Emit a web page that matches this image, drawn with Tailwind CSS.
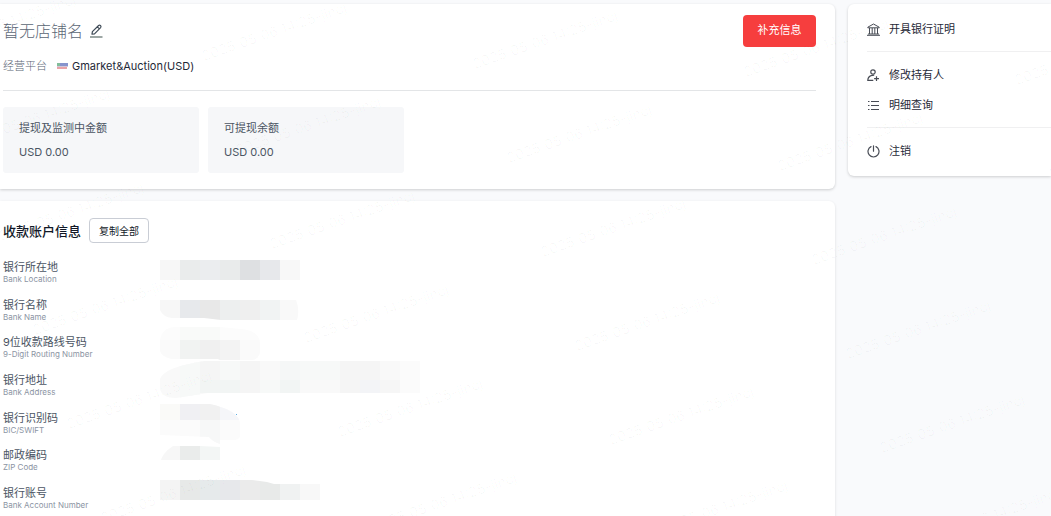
<!DOCTYPE html>
<html lang="zh-CN">
<head>
<meta charset="utf-8">
<meta name="viewport" content="width=device-width, initial-scale=1">
<title>店铺详情</title>
<script src="https://cdn.jsdelivr.net/npm/@tailwindcss/browser@4"></script>
</head>
<body class="relative min-h-screen overflow-hidden bg-[#f9fafc] font-['Inter','Noto_Sans_CJK_SC',sans-serif] text-[11px] leading-4 text-[#1f2937]">
<div class="flex items-start gap-[13px] pt-1">
  <main class="flex min-w-0 flex-1 flex-col gap-3">
    <section class="rounded-r-md bg-white pt-[11px] pr-[19px] pb-4 pl-[3px] shadow-[0_1px_3px_rgba(0,0,0,0.18)]">
      <div class="flex items-start justify-between">
        <div class="flex items-center gap-[7px] pt-1">
          <h1 class="text-base leading-6 font-light text-[#5b6675]">暂无店铺名</h1>
          <button type="button" aria-label="编辑店铺名" class="text-[#3f4b57]">
            <svg class="h-4 w-[13px]" viewBox="0 0 13 16" fill="none" stroke="currentColor"><path d="M2 11.2 2.4 8.7 8.6 2.5Q9.6 1.7 10.6 2.7 11.4 3.6 10.6 4.6L4.5 10.8ZM7.4 3.8 9.4 5.8" stroke-width="1.2" stroke-linejoin="round"/><path d="M0 14H12.5" stroke="#84918f" stroke-width="1.6"/></svg>
          </button>
        </div>
        <button type="button" class="h-8 w-[73px] rounded-[4px] bg-[#f63e3e] pb-[2px] text-white">补充信息</button>
      </div>
      <div class="mt-[11px] flex items-center border-b border-[#e3e5e7] pb-4">
        <span class="font-light text-[#5b6675]">经营平台</span>
        <svg class="mr-1 ml-[10px] h-[6px] w-[11px]" viewBox="0 0 11 6" aria-hidden="true"><path d="M0 0H3V3H0Z" fill="#83bd9b"/><path d="M3 0H11V3H3Z" fill="#8794cd"/><path d="M0 3H11V4H0Z" fill="#d2c7d9"/><path d="M0 4H10V6H0Z" fill="#e9a3a8"/></svg>
        <span>Gmarket&amp;Auction(USD)</span>
      </div>
      <div class="mt-4 flex gap-[9px] text-[#4b5563]">
        <div class="w-[196px] rounded-[3px] bg-[#f6f7f9] px-4 py-[13px]"><p>提现及监测中金额</p><p class="mt-2">USD 0.00</p></div>
        <div class="w-[196px] rounded-[3px] bg-[#f6f7f9] px-4 py-[13px]"><p>可提现余额</p><p class="mt-2">USD 0.00</p></div>
      </div>
    </section>
    <section class="rounded-tr-md bg-white pt-[17px] pr-[19px] pl-[3px] shadow-[0_1px_3px_rgba(0,0,0,0.12)]">
      <div class="flex items-center gap-2">
        <h2 class="text-[13px] font-medium text-[#111827]">收款账户信息</h2>
        <button type="button" class="h-[25px] w-[60px] rounded-[4px] border border-[#c9cdd5] text-[10px] text-[#111827]">复制全部</button>
      </div>
      <div class="mt-3 flex">
        <dl class="w-[157px] shrink-0 text-[#4b5563]">
          <div class="h-[38px] pt-1"><dt class="leading-4">银行所在地</dt><dd class="text-[8px] leading-2 text-[#8b94a3]">Bank Location</dd></div>
          <div class="h-[37px] pt-1"><dt class="leading-4">银行名称</dt><dd class="text-[8px] leading-2 text-[#8b94a3]">Bank Name</dd></div>
          <div class="h-[38px] pt-1"><dt class="leading-4">9位收款路线号码</dt><dd class="text-[8px] leading-2 text-[#8b94a3]">9-Digit Routing Number</dd></div>
          <div class="h-[38px] pt-1"><dt class="leading-4">银行地址</dt><dd class="text-[8px] leading-2 text-[#8b94a3]">Bank Address</dd></div>
          <div class="h-[37px] pt-1"><dt class="leading-4">银行识别码</dt><dd class="text-[8px] leading-2 text-[#8b94a3]">BIC/SWIFT</dd></div>
          <div class="h-[38px] pt-1"><dt class="leading-4">邮政编码</dt><dd class="text-[8px] leading-2 text-[#8b94a3]">ZIP Code</dd></div>
          <div class="h-[38px] pt-1"><dt class="leading-4">银行账号</dt><dd class="text-[8px] leading-2 text-[#8b94a3]">Bank Account Number</dd></div>
        </dl>
        <svg class="h-[261px] w-[300px] shrink-0" viewBox="0 0 300 261" shape-rendering="crispEdges" role="img" aria-label="已隐藏的账户信息">
          <defs>
            <clipPath id="c2"><path d="M0 45H136Q140 55 137 65H61L44 63H12Q3 62 0 55Z"/></clipPath>
            <clipPath id="c3"><path d="M0 85Q2 73 14 72H60L80 74Q99 75 100 88V98Q97 106 90 105H60L58 104H12Q2 102 0 96Z"/></clipPath>
            <clipPath id="c4"><path d="M0 124Q4 112 45 106H260V138H48L16 143Q2 143 0 134Z"/></clipPath>
            <clipPath id="c5"><path d="M0 149H50Q77 155 80 167V182Q78 185 74 185H60V189Q53 187 49 182L0 180Z"/></clipPath>
            <clipPath id="c6"><path d="M0 208Q2 198 13 191L40 191 60 192V205H0Z"/></clipPath>
            <clipPath id="c7"><path d="M0 225H92L107 227 114 229H160V245H0Z"/></clipPath>
          </defs>
          <g>
            <path fill="#f7f7f7" d="M0 5h20v20H0z"/><path fill="#eaecec" d="M20 5h20v20H20z"/><path fill="#ebedef" d="M40 5h20v20H40z"/><path fill="#e9ebeb" d="M60 5h20v20H60z"/><path fill="#dee0e2" d="M80 5h20v20H80z"/><path fill="#e7e8eb" d="M100 5h20v20h-20z"/><path fill="#f8f8f8" d="M120 5h20v20h-20z"/>
          </g>
          <g clip-path="url(#c2)">
            <path fill="#f7f7f7" d="M0 45h20v20H0z"/><path fill="#e7e9ec" d="M20 45h20v20H20z"/><path fill="#e8e8e8" d="M40 45h20v20H40z"/><path fill="#edefef" d="M60 45h20v20H60z"/><path fill="#efefef" d="M80 45h20v20H80z"/><path fill="#f1f3f3" d="M100 45h20v20h-20z"/><path fill="#f9f9f9" d="M120 45h20v20h-20z"/>
          </g>
          <g clip-path="url(#c3)">
            <path fill="#fcfcfc" d="M0 72h100v34H0z"/><path fill="#f9faf9" d="M20 72h40v13H20z"/><path fill="#fafafa" d="M0 85h20v20H0z"/><path fill="#f1f3f2" d="M20 85h20v20H20z"/><path fill="#f0f0f0" d="M40 85h20v20H40z"/><path fill="#f3f3f3" d="M60 85h20v21H60z"/><path fill="#fafafa" d="M80 85h20v21H80z"/>
          </g>
          <g clip-path="url(#c4)">
            <path fill="#f9f9f9" d="M0 106h260v38H0z"/><path fill="#f7f9f8" d="M20 106h20v38H20zM60 106h20v38H60zM100 125h20v13h-20zM140 106h60v19h-60z"/><path fill="#f5f5f5" d="M40 106h20v19H40zM80 106h20v32H80zM180 106h40v32h-40z"/><path fill="#f2f5f4" d="M40 125h40v13H40zM120 125h20v13h-20z"/><path fill="#f5f7f7" d="M120 106h20v19h-20z"/><path fill="#f3f4f7" d="M200 125h20v13h-20z"/><path fill="#f6f6f6" d="M220 125h20v13h-20z"/><path fill="#fbfbfb" d="M240 106h20v32h-20z"/>
          </g>
          <g clip-path="url(#c5)">
            <path fill="#fbfbfb" d="M0 149h80v41H0z"/><path fill="#fafaf8" d="M0 149h20v16H0z"/><path fill="#f0f0f3" d="M20 149h20v16H20z"/><path fill="#f1f1f1" d="M40 149h20v16H40z"/><path fill="#f5f6f9" d="M60 149h20v16H60z"/><path fill="#f7f8f8" d="M40 165h20v24H40z"/>
          </g>
          <path fill="#5faee3" d="M76 159h1v1h-1z"/>
          <g clip-path="url(#c6)">
            <path fill="#f7f7f7" d="M0 191h20v14H0z"/><path fill="#eaeceb" d="M20 191h20v14H20z"/><path fill="#f3f6f5" d="M40 191h20v14H40z"/>
          </g>
          <g clip-path="url(#c7)">
            <path fill="#f4f4f4" d="M0 225h20v20H0z"/><path fill="#e7e9e8" d="M20 225h20v20H20z"/><path fill="#e6eaeb" d="M40 225h20v20H40z"/><path fill="#e7e8eb" d="M60 225h20v20H60z"/><path fill="#ebebeb" d="M80 225h20v20H80z"/><path fill="#e8eae9" d="M100 225h20v20h-20z"/><path fill="#f0f2f2" d="M120 225h20v20h-20z"/><path fill="#f8f8f8" d="M140 225h20v20h-20z"/>
          </g>
        </svg>
      </div>
    </section>
  </main>
  <aside class="w-[203px] shrink-0 rounded-l-md bg-white py-[17px] pl-[19px] shadow-[0_1px_3px_rgba(0,0,0,0.18)]">
    <nav class="flex flex-col">
      <a href="#certificate" class="flex items-center gap-[9px] border-b border-[#f0f0f1] pb-[14px]">
        <svg class="size-[13px]" viewBox="0 0 13 13" fill="none" stroke="#484c55"><path d="M.8 4.2 6.5 1 12.2 4.2V4.8H.8ZM2.5 5V11M5.2 5V11M7.8 5V11M10.5 5V11M1 11H12M0 12.3H13"/></svg>
        <span>开具银行证明</span></a>
      <a href="#holder" class="mt-[15px] flex items-center gap-[9px]">
        <svg class="size-[13px]" viewBox="0 0 13 13" fill="none" stroke="#484c55" stroke-width="1.2"><circle cx="6" cy="3" r="2.2"/><path d="M7.2 6.2Q3 6.2 1.5 8.6.8 9.8.8 11.4H6.3M9.5 7.2V12M7.1 9.6H12"/></svg>
        <span>修改持有人</span></a>
      <a href="#records" class="mt-[14px] flex items-center gap-[9px] border-b border-[#f0f0f1] pb-[14px]">
        <svg class="size-[13px]" viewBox="0 0 13 13" fill="none" stroke="#484c55"><path d="M1 2.5H2.5M4 2.5H12M1 6.5H2.5M4 6.5H12M1 10.5H2.5M4 10.5H12"/></svg>
        <span>明细查询</span></a>
      <a href="#close" class="mt-[15px] flex items-center gap-[9px]">
        <svg class="size-[13px]" viewBox="0 0 13 13" fill="none" stroke="#484c55" stroke-width="1.2" stroke-linecap="round"><path d="M4 1.6A5.5 5.5 0 1 0 9 1.6M6.5.8V6.2"/></svg>
        <span>注销</span></a>
    </nav>
  </aside>
</div>
<svg id="watermark" class="pointer-events-none absolute inset-0 h-full w-full fill-black/3 text-[14px]" aria-hidden="true"></svg>
<script>
  // Repeat the session watermark on a slanted lattice, skipping marks outside the view.
  const layer = document.getElementById('watermark');
  for (let row = -1; row < 7; row++) {
    for (let col = -3; col < 5; col++) {
      const x = 204 + col * 271 + row * 34;
      const y = 61 + col * 8 + row * 94;
      if (x < -140 || x > innerWidth || y < 8 || y > innerHeight + 50) continue;
      const mark = document.createElementNS('http://www.w3.org/2000/svg', 'text');
      mark.setAttribute('transform', `translate(${x} ${y}) rotate(-19)`);
      mark.textContent = '2025/05/06 14:25-jincj';
      layer.append(mark);
    }
  }
</script>
</body>
</html>
